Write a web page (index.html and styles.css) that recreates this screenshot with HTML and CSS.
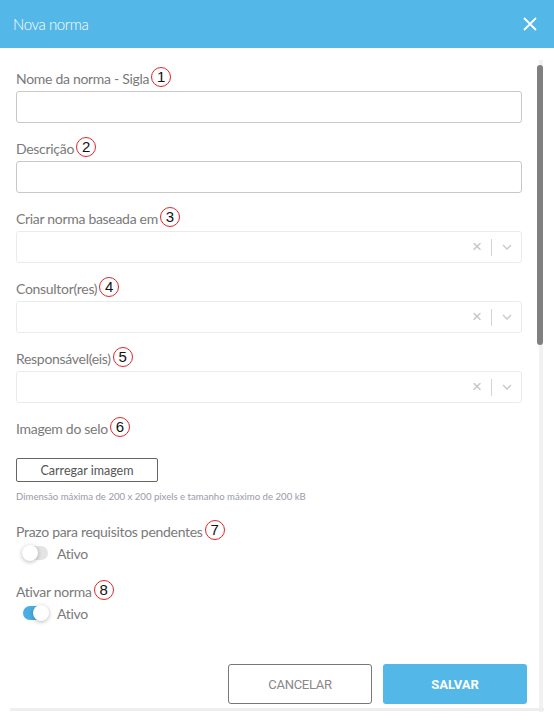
FILE: index.html
```html
<!DOCTYPE html>
<html lang="pt">
<head>
<meta charset="utf-8">
<title>Nova norma</title>
<link rel="stylesheet" href="styles.css">
</head>
<body>
<div class="modal">
  <header class="modal-header">
    <h1 class="modal-title">Nova norma</h1>
    <button class="close-btn" aria-label="Fechar">
      <svg width="14" height="14" viewBox="0 0 14 14"><path d="M1 1L13 13M13 1L1 13" stroke="#fff" stroke-width="1.8" fill="none"/></svg>
    </button>
  </header>
  <div class="modal-body">
    <div class="field">
      <label class="label">Nome da norma - Sigla<span class="mark">1</span></label>
      <input class="input" type="text">
    </div>
    <div class="field">
      <label class="label">Descrição<span class="mark">2</span></label>
      <input class="input" type="text">
    </div>
    <div class="field">
      <label class="label">Criar norma baseada em<span class="mark">3</span></label>
      <div class="select">
        <span class="sel-clear">×</span><span class="sel-sep"></span>
        <svg class="sel-arrow" width="10" height="6" viewBox="0 0 10 6"><path d="M1 1L5 5L9 1" stroke="#c8c8c8" stroke-width="1.3" fill="none"/></svg>
      </div>
    </div>
    <div class="field">
      <label class="label">Consultor(res)<span class="mark">4</span></label>
      <div class="select">
        <span class="sel-clear">×</span><span class="sel-sep"></span>
        <svg class="sel-arrow" width="10" height="6" viewBox="0 0 10 6"><path d="M1 1L5 5L9 1" stroke="#c8c8c8" stroke-width="1.3" fill="none"/></svg>
      </div>
    </div>
    <div class="field">
      <label class="label">Responsável(eis)<span class="mark">5</span></label>
      <div class="select">
        <span class="sel-clear">×</span><span class="sel-sep"></span>
        <svg class="sel-arrow" width="10" height="6" viewBox="0 0 10 6"><path d="M1 1L5 5L9 1" stroke="#c8c8c8" stroke-width="1.3" fill="none"/></svg>
      </div>
    </div>
    <div class="field field-image">
      <label class="label">Imagem do selo<span class="mark">6</span></label>
      <button class="upload-btn">Carregar imagem</button>
      <p class="help">Dimensão máxima de 200 x 200 pixels e tamanho máximo de 200 kB</p>
    </div>
    <div class="field field-toggle">
      <label class="label">Prazo para requisitos pendentes<span class="mark">7</span></label>
      <div class="toggle-row">
        <span class="toggle"><span class="knob"></span></span>
        <span class="toggle-text">Ativo</span>
      </div>
    </div>
    <div class="field field-toggle">
      <label class="label">Ativar norma<span class="mark">8</span></label>
      <div class="toggle-row">
        <span class="toggle on"><span class="knob"></span></span>
        <span class="toggle-text">Ativo</span>
      </div>
    </div>
  </div>
  <footer class="modal-footer">
    <button class="btn btn-cancel">CANCELAR</button>
    <button class="btn btn-save">SALVAR</button>
  </footer>
  <div class="scroll-track"></div>
  <div class="scroll-thumb"></div>
  <div class="bottom-bar"></div>
</div>
</body>
</html>
```

FILE: styles.css
```css
* { box-sizing: border-box; }
html, body { margin: 0; padding: 0; background: #fff; }
body {
  font-family: Lato, "Open Sans", "Liberation Sans", sans-serif;
  color: #7a7a7a;
  width: 554px;
  height: 720px;
  overflow: hidden;
}
.modal {
  position: relative;
  width: 554px;
  height: 720px;
}
.modal-header {
  height: 48px;
  background: #53b7e8;
  display: flex;
  align-items: center;
  justify-content: space-between;
  padding: 0 17px 0 13px;
}
.modal-title {
  margin: 0;
  font-size: 15px;
  font-weight: 300;
  color: #fff;
  letter-spacing: -0.4px;
}
.close-btn {
  background: none;
  border: 0;
  padding: 0;
  width: 14px;
  height: 14px;
  display: flex;
}
.modal-body {
  padding: 20px 32px 0 16px;
}
.field {
  display: flex;
  flex-direction: column;
  margin-bottom: 15px;
}
.label {
  height: 22px;
  line-height: 22px;
  font-size: 14px;
  letter-spacing: -0.3px;
  color: #7a7a7a;
  margin-bottom: 1px;
  display: flex;
  align-items: center;
}
.mark {
  display: inline-flex;
  align-items: center;
  justify-content: center;
  width: 20px;
  height: 20px;
  border: 1.2px solid #e0262a;
  border-radius: 50%;
  color: #111;
  font-family: "Liberation Sans", Arial, sans-serif;
  font-size: 15px;
  letter-spacing: 0;
  margin-left: 2px;
  margin-top: -4px;
}
.input {
  height: 32px;
  border: 1px solid #c8c8c8;
  border-radius: 3px;
  width: 100%;
  font-family: inherit;
}
.select {
  height: 32px;
  border: 1px solid #ebebeb;
  border-radius: 3px;
  display: flex;
  align-items: center;
  justify-content: flex-end;
  padding-right: 9px;
}
.sel-clear {
  color: #c4c4c4;
  font-size: 17px;
  line-height: 1;
  font-family: "Liberation Sans", Arial, sans-serif;
  margin-right: 9px;
  margin-top: -1px;
}
.sel-sep {
  width: 1px;
  height: 17px;
  background: #d4d4d4;
  margin-right: 10px;
}
.sel-arrow { display: block; }
.field-image .label { margin-bottom: 18px; }
.upload-btn {
  width: 142px;
  height: 24px;
  border: 1px solid #666;
  border-radius: 2px;
  background: #fff;
  color: #555;
  font-family: inherit;
  font-size: 12.5px;
  padding: 0;
}
.help {
  margin: 8px 0 0 0;
  font-size: 9.6px;
  color: #9a9aa8;
  line-height: 14px;
}
.field-image { margin-bottom: 17px; }
.field-toggle { margin-bottom: 17px; }
.field-toggle .label { margin-bottom: 1px; }
.toggle-row {
  display: flex;
  align-items: center;
  height: 22px;
  padding-left: 7px;
  margin-top: -2px;
}
.toggle {
  position: relative;
  width: 25px;
  height: 14px;
  border-radius: 7px;
  background: #e4e4e4;
  margin-right: 9px;
}
.toggle .knob {
  position: absolute;
  top: -1px;
  left: -1px;
  width: 16px;
  height: 16px;
  border-radius: 50%;
  background: #fff;
  box-shadow: 0 1px 4px rgba(0,0,0,0.28);
}
.toggle.on { background: #4aaee2; }
.toggle.on .knob { left: 10px; }
.toggle-text {
  font-size: 14px;
  letter-spacing: -0.3px;
  color: #7a7a7a;
}
.modal-footer {
  display: flex;
  justify-content: flex-end;
  gap: 11px;
  padding: 23px 27px 0 0;
}
.btn {
  width: 144px;
  height: 40px;
  border-radius: 3px;
  font-family: "Roboto", "Liberation Sans", sans-serif;
  font-size: 13px;
  padding: 0;
}
.btn-cancel {
  background: #fff;
  border: 1px solid #777;
  color: #888;
  font-weight: 400;
  letter-spacing: -0.3px;
}
.btn-save {
  background: #53b7e8;
  border: 0;
  color: #fff;
  font-weight: 700;
}
.scroll-track {
  position: absolute;
  left: 539px;
  top: 60px;
  width: 4px;
  height: 652px;
  background: #f1f1f1;
}
.scroll-thumb {
  position: absolute;
  left: 537px;
  top: 65px;
  width: 6px;
  height: 280px;
  border-radius: 3px;
  background: #808080;
}
.bottom-bar {
  position: absolute;
  left: 10px;
  top: 708px;
  width: 534px;
  height: 3px;
  background: #eeeeee;
}
```
